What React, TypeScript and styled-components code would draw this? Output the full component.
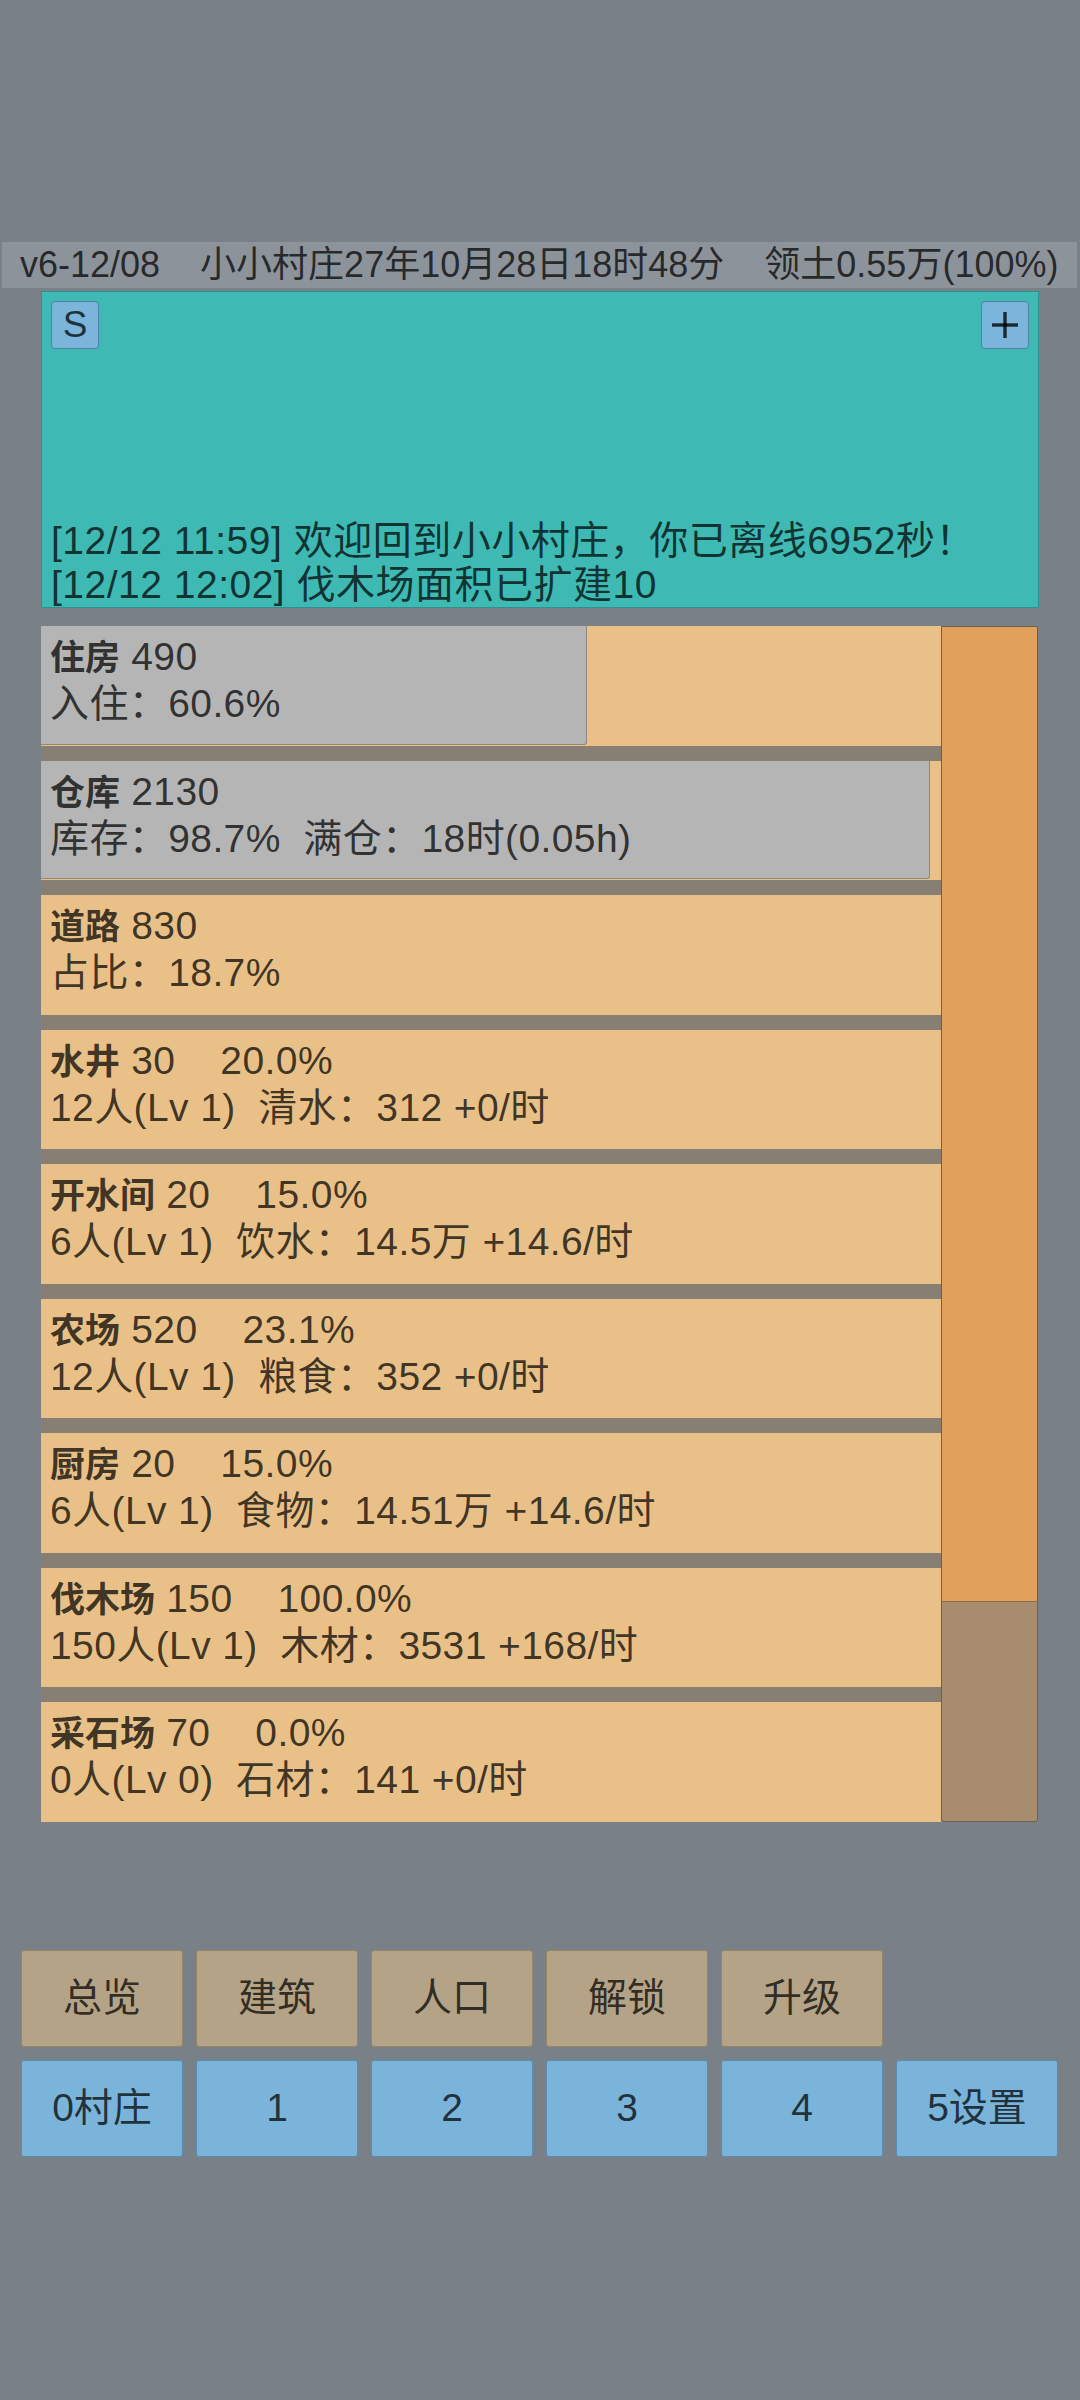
import styled, { createGlobalStyle } from "styled-components";

const GlobalStyle = createGlobalStyle`
  body {
    margin: 0;
    background-color: #798088;
    font-family: "Liberation Sans", "Noto Sans CJK SC", sans-serif;
    color: rgba(0, 0, 0, 0.74);
  }
`;

interface Building {
  name: string;
  head: string;
  detail: string;
  fill?: number;
}

const buildings: Building[] = [
  { name: "住房", head: " 490", detail: "入住：60.6%", fill: 60.6 },
  { name: "仓库", head: " 2130", detail: "库存：98.7%  满仓：18时(0.05h)", fill: 98.7 },
  { name: "道路", head: " 830", detail: "占比：18.7%" },
  { name: "水井", head: " 30    20.0%", detail: "12人(Lv 1)  清水：312 +0/时" },
  { name: "开水间", head: " 20    15.0%", detail: "6人(Lv 1)  饮水：14.5万 +14.6/时" },
  { name: "农场", head: " 520    23.1%", detail: "12人(Lv 1)  粮食：352 +0/时" },
  { name: "厨房", head: " 20    15.0%", detail: "6人(Lv 1)  食物：14.51万 +14.6/时" },
  { name: "伐木场", head: " 150    100.0%", detail: "150人(Lv 1)  木材：3531 +168/时" },
  { name: "采石场", head: " 70    0.0%", detail: "0人(Lv 0)  石材：141 +0/时" },
];

const logs = [
  "[12/12 11:59] 欢迎回到小小村庄，你已离线6952秒！",
  "[12/12 12:02] 伐木场面积已扩建10",
];

const tabs = ["总览", "建筑", "人口", "解锁", "升级"];
const pages = ["0村庄", "1", "2", "3", "4", "5设置"];

const Page = styled.div`
  min-height: 2400px;
  padding-top: 242px;
  box-sizing: border-box;
`;

const TopBar = styled.div`
  margin: 0 3px 0 2px;
  height: 46px;
  line-height: 46px;
  padding-left: 18px;
  background-color: #8d939a;
  font-size: 36px;
  white-space: pre;
`;

const Main = styled.div`
  margin: 3px 41px 0 41px;
`;

const LogPanel = styled.div`
  height: 317px;
  box-sizing: border-box;
  background-color: #3eb9b4;
  border: 1px solid #2d928d;
  padding: 9px 9px 0 9px;
  display: flex;
  flex-direction: column;
  overflow: hidden;
`;

const LogTools = styled.div`
  display: flex;
  justify-content: space-between;
`;

const SmallButton = styled.div`
  width: 48px;
  height: 48px;
  box-sizing: border-box;
  display: flex;
  align-items: center;
  justify-content: center;
  background-color: #7bb5dc;
  border: 1px solid #4f81a4;
  border-radius: 4px;
  font-size: 37px;
  line-height: 46px;
`;

const LogLines = styled.div`
  margin-top: auto;
  font-size: 39px;
  line-height: 44px;
  letter-spacing: 0.5px;
  white-space: pre;
`;

const List = styled.div`
  margin-top: 18px;
  display: grid;
  grid-template-columns: 900px 97px;
`;

const Rows = styled.div`
  display: flex;
  flex-direction: column;
  gap: 15px;
  background-color: #877f74;
`;

const Row = styled.div`
  position: relative;
  height: 119.5px;
  background-color: #e9c188;
`;

const RowFill = styled.div`
  position: absolute;
  left: 0;
  top: 0;
  bottom: 1px;
  background-color: #b5b5b5;
  border-right: 1px solid #8e887e;
  border-bottom: 1px solid #8e887e;
  border-radius: 0 0 3px 0;
`;

const RowText = styled.div`
  position: relative;
  padding: 8px 0 0 9px;
  font-size: 39px;
  line-height: 46px;
  letter-spacing: 0.4px;
  white-space: pre;
`;

const Name = styled.span`
  font-weight: 700;
  font-size: 35px;
  letter-spacing: 0;
`;

const SideBar = styled.div`
  box-sizing: border-box;
  background-color: #a78d6e;
  border: 1px solid #6c624f;
  border-radius: 0 0 3px 3px;
  overflow: hidden;
`;

const SideFill = styled.div`
  background-color: #e1a15c;
  border-bottom: 1px solid #8e7048;
`;

const Nav = styled.div`
  margin-top: 128px;
  padding-left: 21px;
  display: grid;
  grid-template-columns: repeat(6, 162px);
  column-gap: 13px;
  row-gap: 13px;
`;

const NavButton = styled.div<{ $tone: "tan" | "blue" }>`
  height: 97px;
  box-sizing: border-box;
  display: flex;
  align-items: center;
  justify-content: center;
  font-size: 39px;
  line-height: 46px;
  border-radius: 3px;
  background-color: ${({ $tone }) => ($tone === "tan" ? "#b4a386" : "#7ab4da")};
  border: 1px solid ${({ $tone }) => ($tone === "tan" ? "#958668" : "#5a8db3")};
`;

const Spacer = styled.div``;

const PlusIcon = () => (
  <svg width="26" height="26" viewBox="0 0 26 26">
    <rect x="11.3" y="0" width="3.4" height="26" fill="rgba(0,0,0,0.78)" />
    <rect x="0" y="11.3" width="26" height="3.4" fill="rgba(0,0,0,0.78)" />
  </svg>
);

export default function App() {
  return (
    <Page>
      <GlobalStyle />
      <TopBar>{"v6-12/08    小小村庄27年10月28日18时48分    领土0.55万(100%)"}</TopBar>
      <Main>
        <LogPanel>
          <LogTools>
            <SmallButton>S</SmallButton>
            <SmallButton>
              <PlusIcon />
            </SmallButton>
          </LogTools>
          <LogLines>
            {logs.map((line) => (
              <div key={line}>{line}</div>
            ))}
          </LogLines>
        </LogPanel>
        <List>
          <Rows>
            {buildings.map((b) => (
              <Row key={b.name}>
                {b.fill !== undefined ? <RowFill style={{ width: `${b.fill}%` }} /> : null}
                <RowText>
                  <div>
                    <Name>{b.name}</Name>
                    {b.head}
                  </div>
                  <div>{b.detail}</div>
                </RowText>
              </Row>
            ))}
          </Rows>
          <SideBar>
            <SideFill style={{ height: "81.6%" }} />
          </SideBar>
        </List>
      </Main>
      <Nav>
        {tabs.map((t) => (
          <NavButton key={t} $tone="tan">
            {t}
          </NavButton>
        ))}
        <Spacer />
        {pages.map((p) => (
          <NavButton key={p} $tone="blue">
            {p}
          </NavButton>
        ))}
      </Nav>
    </Page>
  );
}
